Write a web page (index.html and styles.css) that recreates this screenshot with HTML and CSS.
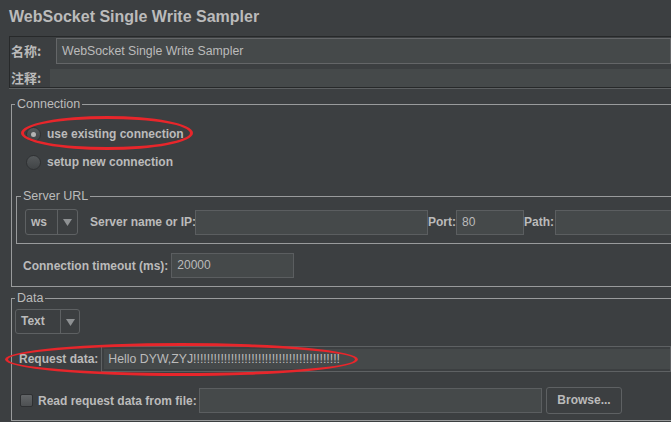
FILE: index.html
```html
<!DOCTYPE html>
<html>
<head>
<meta charset="utf-8">
<link rel="stylesheet" href="styles.css">
</head>
<body>
<div class="page">
  <h1 class="title">WebSocket Single Write Sampler</h1>

  <div class="name-panel">
    <div class="name-row">
      <span class="cjk-label name-label">名称:</span>
      <div class="field name-field">WebSocket Single Write Sampler</div>
    </div>
    <div class="comment-row">
      <span class="cjk-label comment-label">注释:</span>
      <div class="comment-field"></div>
    </div>
  </div>

  <fieldset class="group conn-group">
    <legend class="legend">Connection</legend>
    <div class="radios">
      <div class="radio-row"><span class="radio checked"><span class="dot"></span></span><span class="label">use existing connection</span></div>
      <div class="radio-row"><span class="radio"></span><span class="label">setup new connection</span></div>
    </div>

    <fieldset class="group url-group">
      <legend class="legend url-legend">Server URL</legend>
      <div class="url-row">
        <div class="combo ws-combo"><span class="combo-text">ws</span><span class="combo-arrow"><svg width="9" height="7" viewBox="0 0 9 7"><path d="M0 0H9L4.5 7Z" fill="#8e9193"/></svg></span></div>
        <span class="label server-label">Server name or IP:</span>
        <div class="field server-field"></div>
        <span class="label">Port:</span>
        <div class="field port-field">80</div>
        <span class="label">Path:</span>
        <div class="field path-field"></div>
      </div>
    </fieldset>

    <div class="timeout-row">
      <span class="label">Connection timeout (ms):</span>
      <div class="field timeout-field">20000</div>
    </div>
  </fieldset>

  <fieldset class="group data-group">
    <legend class="legend">Data</legend>
    <div class="combo text-combo"><span class="combo-text">Text</span><span class="combo-arrow"><svg width="9" height="7" viewBox="0 0 9 7"><path d="M0 0H9L4.5 7Z" fill="#8e9193"/></svg></span></div>
    <div class="request-row">
      <span class="label">Request data:</span>
      <div class="request-area"><div class="request-inner">Hello DYW,ZYJ!!!!!!!!!!!!!!!!!!!!!!!!!!!!!!!!!!!!!!!!!!!</div></div>
    </div>
    <div class="file-row">
      <span class="checkbox"></span>
      <span class="label file-label">Read request data from file:</span>
      <div class="field file-field"></div>
      <div class="button">Browse...</div>
    </div>
  </fieldset>

  <div class="mark mark-one"></div>
  <div class="mark mark-two"></div>
</div>
</body>
</html>
```

FILE: styles.css
```css
html, body {
  margin: 0;
  padding: 0;
  background: #3c3f41;
  overflow: hidden;
}
.page {
  position: relative;
  width: 671px;
  height: 422px;
  overflow: hidden;
  font-family: "Liberation Sans", Arial, "Noto Sans CJK SC", sans-serif;
  font-size: 12px;
  color: #bbbbbb;
}
.title {
  margin: 0;
  padding: 7px 0 0 9px;
  font-size: 16px;
  line-height: 20px;
  font-weight: bold;
  color: #bbbbbb;
}
.name-panel {
  margin: 9px 0 0 9px;
  border-top: 1px solid #27292a;
  border-left: 1px solid #27292a;
  border-bottom: 1px solid #27292a;
  box-shadow: 0 1px 0 #5d6062;
  padding-top: 1px;
}
.name-row {
  display: flex;
  align-items: center;
  height: 26px;
}
.cjk-label {
  font-family: "Noto Sans CJK SC", sans-serif;
  font-size: 13px;
  font-weight: bold;
  padding-left: 1px;
  line-height: 18px;
  color: #bbbbbb;
}
.name-label { width: 45px; flex: none; }
.comment-label { width: 39px; flex: none; }
.field {
  box-sizing: border-box;
  height: 25px;
  border: 1px solid #5b5e60;
  background: #45494a;
  padding-left: 5px;
  line-height: 23px;
  color: #bbbbbb;
  font-size: 12px;
}
.name-field {
  flex: 1;
  height: 26px;
  line-height: 24px;
  font-size: 12.3px;
  border-color: #646668;
}
.comment-row {
  display: flex;
  align-items: center;
  height: 18px;
  margin-top: 5px;
}
.comment-field {
  flex: 1;
  height: 18px;
  background: #45494a;
}
.group {
  margin: 9px 0 0 11px;
  padding: 0;
  border: 1px solid #999b9c;
  border-right: 0;
  min-width: 0;
}
.legend {
  margin-left: 3px;
  padding: 0 2px;
  font-size: 12.5px;
  line-height: 14px;
  color: #bbbbbb;
}
.radios {
  padding: 9px 0 0 14px;
}
.radio-row {
  display: flex;
  align-items: center;
  height: 28px;
}
.radio {
  box-sizing: border-box;
  width: 15px;
  height: 15px;
  border-radius: 50%;
  border: 1px solid #2f3133;
  background: linear-gradient(#55595b, #414446);
  display: flex;
  align-items: center;
  justify-content: center;
  margin-right: 6px;
}
.dot {
  width: 5px;
  height: 5px;
  border-radius: 50%;
  background: #b4b4b4;
}
.label {
  font-weight: bold;
  white-space: nowrap;
  color: #bbbbbb;
}
.url-group {
  margin: 13px 0 0 4px;
}
.url-legend {
  margin-left: 4px;
}
.url-row {
  display: flex;
  align-items: center;
  padding: 6px 0 8px 8px;
}
.combo {
  box-sizing: border-box;
  display: flex;
  height: 26px;
  border: 1px solid #5e6163;
  border-radius: 3px;
  flex: none;
}
.combo-text {
  font-weight: bold;
  line-height: 24px;
  padding-left: 5px;
  border-right: 1px solid #5e6163;
}
.combo-arrow {
  display: flex;
  align-items: center;
  justify-content: center;
  flex: 1;
  padding-top: 1px;
}
.ws-combo { width: 53px; }
.ws-combo .combo-text { width: 26px; }
.server-label { margin-left: 12px; width: 105px; }
.server-field { width: 233px; flex: none; }
.port-field { width: 68px; flex: none; }
.path-field { width: 130px; flex: none; margin-left: 1px; }
.timeout-row {
  display: flex;
  align-items: center;
  margin: 9px 0 8px 11px;
}
.timeout-field {
  width: 123px;
  margin-left: 3px;
}
.data-group {
  margin-top: 4px;
}
.text-combo {
  width: 65px;
  height: 25px;
  margin: 4px 0 0 3px;
}
.text-combo .combo-text {
  width: 39px;
  line-height: 23px;
}
.request-row {
  display: flex;
  align-items: center;
  margin: 12px 0 0 7px;
}
.request-area {
  box-sizing: border-box;
  flex: 1;
  height: 26px;
  margin-left: 3px;
  border: 1px solid #5e6163;
  padding: 2px 0 2px 2px;
}
.request-inner {
  height: 20px;
  background: #45494a;
  line-height: 20px;
  padding-left: 4px;
  white-space: nowrap;
  color: #bbbbbb;
  font-size: 12.3px;
}
.file-row {
  display: flex;
  align-items: center;
  margin: 15px 0 6px 8px;
}
.checkbox {
  box-sizing: border-box;
  width: 13px;
  height: 13px;
  border: 1px solid #2e3032;
  border-radius: 2px;
  background: linear-gradient(#626567, #4d5052);
  margin-right: 5px;
}
.file-label { width: 161px; }
.file-field { width: 343px; flex: none; }
.button {
  box-sizing: border-box;
  width: 76px;
  height: 27px;
  margin-left: 4px;
  border: 1px solid #5e6163;
  border-radius: 3px;
  text-align: center;
  line-height: 25px;
  font-weight: bold;
  color: #bbbbbb;
}
.mark {
  position: absolute;
  box-sizing: border-box;
  border: 3px solid #e8262b;
  border-radius: 50%;
}
.mark-one {
  left: 21px;
  top: 116px;
  width: 172px;
  height: 34px;
}
.mark-two {
  left: 5px;
  top: 343px;
  width: 353px;
  height: 33px;
}
```
